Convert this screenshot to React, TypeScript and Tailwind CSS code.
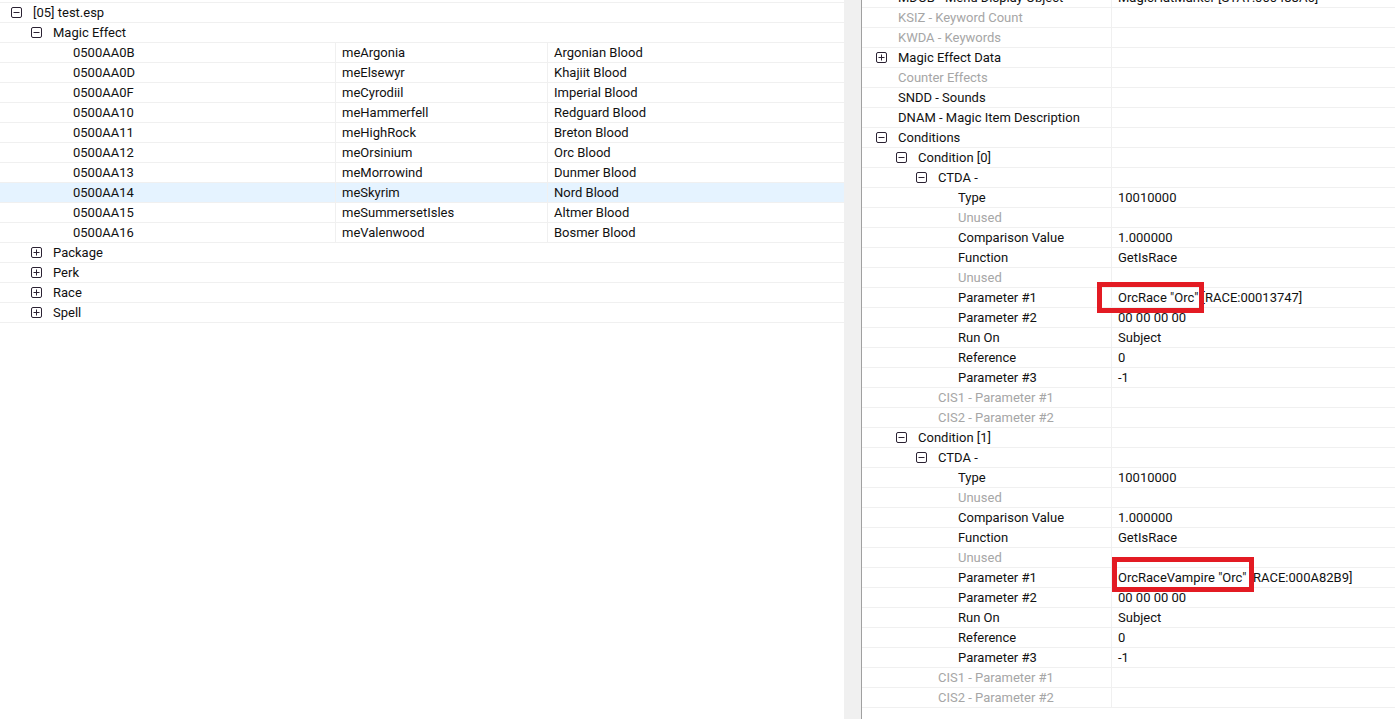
import type { ReactNode } from 'react';

// Record tree (left) + record view (right), xEdit style.

type Expander = 'open' | 'closed' | null;

function TreeBox({ kind }: { kind: 'open' | 'closed' }) {
  return (
    <svg width="11" height="11" viewBox="0 0 11 11" className="shrink-0">
      <rect x="0.5" y="0.5" width="10" height="10" rx="1.5" fill="white" stroke="#2b2233" strokeWidth="1" />
      <line x1="2.5" y1="5.5" x2="8.5" y2="5.5" stroke="#2b2233" strokeWidth="1" />
      {kind === 'closed' && <line x1="5.5" y1="2.5" x2="5.5" y2="8.5" stroke="#2b2233" strokeWidth="1" />}
    </svg>
  );
}

function Label({ level, exp, base, children, dim }: { level: number; exp: Expander; base: number; children: ReactNode; dim?: boolean }) {
  return (
    <div className="flex items-center h-full whitespace-nowrap" style={{ paddingLeft: base + level * 20 }}>
      <div className="w-[22px] flex items-center">{exp && <TreeBox kind={exp} />}</div>
      <span className={dim ? 'text-[#a6a6a6]' : 'text-[#111]'}>{children}</span>
    </div>
  );
}

// ── Left panel data ──────────────────────────────────────────────────────────

const EFFECTS = [
  ['0500AA0B', 'meArgonia', 'Argonian Blood'],
  ['0500AA0D', 'meElsewyr', 'Khajiit Blood'],
  ['0500AA0F', 'meCyrodiil', 'Imperial Blood'],
  ['0500AA10', 'meHammerfell', 'Redguard Blood'],
  ['0500AA11', 'meHighRock', 'Breton Blood'],
  ['0500AA12', 'meOrsinium', 'Orc Blood'],
  ['0500AA13', 'meMorrowind', 'Dunmer Blood'],
  ['0500AA14', 'meSkyrim', 'Nord Blood'],
  ['0500AA15', 'meSummersetIsles', 'Altmer Blood'],
  ['0500AA16', 'meValenwood', 'Bosmer Blood'],
];

const GROUPS = ['Package', 'Perk', 'Race', 'Spell'];

// ── Right panel data ─────────────────────────────────────────────────────────

interface Field {
  label: string;
  level: number;
  exp?: Expander;
  value?: string;
  dim?: boolean;
}

function conditionFields(idx: number, param1: string): Field[] {
  return [
    { label: `Condition [${idx}]`, level: 1, exp: 'open' },
    { label: 'CTDA -', level: 2, exp: 'open' },
    { label: 'Type', level: 3, value: '10010000' },
    { label: 'Unused', level: 3, dim: true },
    { label: 'Comparison Value', level: 3, value: '1.000000' },
    { label: 'Function', level: 3, value: 'GetIsRace' },
    { label: 'Unused', level: 3, dim: true },
    { label: 'Parameter #1', level: 3, value: param1 },
    { label: 'Parameter #2', level: 3, value: '00 00 00 00' },
    { label: 'Run On', level: 3, value: 'Subject' },
    { label: 'Reference', level: 3, value: '0' },
    { label: 'Parameter #3', level: 3, value: '-1' },
    { label: 'CIS1 - Parameter #1', level: 2, dim: true },
    { label: 'CIS2 - Parameter #2', level: 2, dim: true },
  ];
}

const FIELDS: Field[] = [
  { label: 'MDOB - Menu Display Object', level: 0, value: 'MagicHatMarker [STAT:000488A6]' },
  { label: 'KSIZ - Keyword Count', level: 0, dim: true },
  { label: 'KWDA - Keywords', level: 0, dim: true },
  { label: 'Magic Effect Data', level: 0, exp: 'closed' },
  { label: 'Counter Effects', level: 0, dim: true },
  { label: 'SNDD - Sounds', level: 0 },
  { label: 'DNAM - Magic Item Description', level: 0 },
  { label: 'Conditions', level: 0, exp: 'open' },
  ...conditionFields(0, 'OrcRace "Orc" [RACE:00013747]'),
  ...conditionFields(1, 'OrcRaceVampire "Orc" [RACE:000A82B9]'),
];

export default function App() {
  return (
    <div
      className="relative flex w-[1395px] h-[719px] overflow-hidden bg-white text-[13px] leading-none"
      style={{ fontFamily: 'Roboto, "Noto Sans", sans-serif' }}
    >
      {/* Left: navigation tree */}
      <div className="w-[844px] shrink-0">
        <div className="h-[3px] border-b border-[#f0f0f0]" />
        <div className="h-[20px] border-b border-[#f0f0f0]">
          <Label level={0} exp="open" base={11}>[05] test.esp</Label>
        </div>
        <div className="h-[20px] border-b border-[#f0f0f0]">
          <Label level={1} exp="open" base={11}>Magic Effect</Label>
        </div>
        {EFFECTS.map(([id, edid, name]) => (
          <div
            key={id}
            className={`flex h-[20px] border-b border-[#f0f0f0] ${id === '0500AA14' ? 'bg-[#e5f3ff]' : ''}`}
          >
            <div className="w-[336px] border-r border-[#f0f0f0] flex items-center pl-[73px] text-[#111]">{id}</div>
            <div className="w-[212px] border-r border-[#f0f0f0] flex items-center pl-[6px] text-[#111]">{edid}</div>
            <div className="flex-1 flex items-center pl-[6px] text-[#111]">{name}</div>
          </div>
        ))}
        {GROUPS.map((g) => (
          <div key={g} className="h-[20px] border-b border-[#f0f0f0]">
            <Label level={1} exp="closed" base={11}>{g}</Label>
          </div>
        ))}
      </div>

      {/* scrollbar gutter */}
      <div className="w-[18px] shrink-0 bg-[#f0f0f0] border-r border-[#a0a0a0]" />

      {/* Right: record view */}
      <div className="flex-1 overflow-hidden">
        <div className="-mt-[12px]">
          {FIELDS.map((f, i) => (
            <div key={i} className="flex h-[20px] border-b border-[#f0f0f0]">
              <div className="w-[250px] shrink-0 border-r border-[#f0f0f0]">
                <Label level={f.level} exp={f.exp ?? null} base={14} dim={f.dim}>{f.label}</Label>
              </div>
              <div className="flex-1 flex items-center pl-[6px] whitespace-nowrap text-[#111]">{f.value}</div>
            </div>
          ))}
        </div>
      </div>

      {/* annotation boxes */}
      <div className="absolute left-[1097px] top-[282px] w-[107px] h-[31px] border-[5px] border-[#e31b23]" />
      <div className="absolute left-[1112px] top-[557px] w-[142px] h-[35px] border-[5px] border-[#e31b23]" />
    </div>
  );
}
